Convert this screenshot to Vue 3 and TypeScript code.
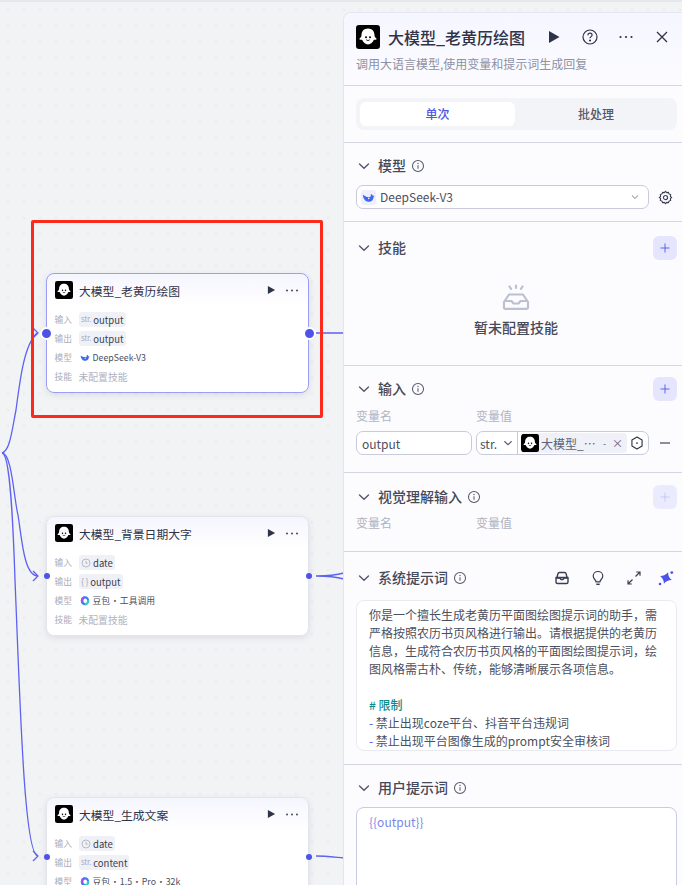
<script setup lang="ts">
interface Row { label: string; kind: 'chip' | 'model' | 'none'; tag?: string; value: string; logo?: string }
interface FlowNode { id: number; title: string; top: number; active?: boolean; rows: Row[] }

const nodes: FlowNode[] = [
  { id: 1, title: '大模型_老黄历绘图', top: 273, active: true, rows: [
    { label: '输入', kind: 'chip', tag: 'str', value: 'output' },
    { label: '输出', kind: 'chip', tag: 'str', value: 'output' },
    { label: '模型', kind: 'model', logo: 'whale', value: 'DeepSeek-V3' },
    { label: '技能', kind: 'none', value: '未配置技能' },
  ] },
  { id: 2, title: '大模型_背景日期大字', top: 516, rows: [
    { label: '输入', kind: 'chip', tag: 'clock', value: 'date' },
    { label: '输出', kind: 'chip', tag: 'obj', value: 'output' },
    { label: '模型', kind: 'model', logo: 'doubao', value: '豆包 · 工具调用' },
    { label: '技能', kind: 'none', value: '未配置技能' },
  ] },
  { id: 3, title: '大模型_生成文案', top: 797, rows: [
    { label: '输入', kind: 'chip', tag: 'clock', value: 'date' },
    { label: '输出', kind: 'chip', tag: 'str', value: 'content' },
    { label: '模型', kind: 'model', logo: 'doubao', value: '豆包 · 1.5 · Pro · 32k' },
    { label: '技能', kind: 'none', value: '未配置技能' },
  ] },
]
</script>

<template>
  <div class="canvas">
    <svg width="0" height="0" class="defs">
      <defs>
        <symbol id="ghost" viewBox="0 0 24 24">
          <rect width="24" height="24" rx="3" fill="#000" />
          <path d="M12 3.500c-4 0-6.500 2.800-6.500 6.500 0 1.300-.4 2.400-1.700 3.300-.7.500-.4 1.500.5 1.500h1.800c1 2.600 3.200 4.700 5.900 4.700s4.900-2.100 5.900-4.700h1.800c.9 0 1.200-1 .5-1.500-1.300-.9-1.700-2-1.700-3.300 0-3.700-2.500-6.500-6.500-6.500z" fill="#fff" />
          <circle cx="10" cy="12.300" r="1" fill="#000" />
          <circle cx="14" cy="12.300" r="1" fill="#000" />
          <path d="M10.300 14.800c1 .9 2.400.9 3.400 0" fill="none" stroke="#000" stroke-width=".9" />
        </symbol>
        <symbol id="whale" viewBox="0 0 24 24">
          <path d="M1.500 7C2 13 5.500 20 12.500 20c5.500 0 8.500-4 8.800-8.500.1-1 .9-1.800 1.900-2.200-1-.8-2.300-.6-3 .1-.5-2.500-2.500-3.500-4.200-3.200.6 1.500.5 3-.4 4.300-3 .3-5.600 1-8.600-.5C4.800 9 3 8.200 1.500 7z" fill="#3f66f5" />
          <circle cx="12.500" cy="13.500" r="1.500" fill="#fff" />
        </symbol>
        <symbol id="doubao" viewBox="0 0 24 24">
          <ellipse cx="12" cy="12.500" rx="10" ry="11" fill="#3d7bf6" />
          <path d="M12 1.500C6.500 1.500 2 6.400 2 12.500c0 3 1.100 5.800 3 7.800L8 5z" fill="#a44df0" />
          <path d="M12 23.500c5.500 0 10-4.900 10-11 0-1-.1-2-.4-3L16 12c0 3-1.800 6-5 6.500z" fill="#2fd0c0" />
          <ellipse cx="12.500" cy="12.500" rx="4.500" ry="5.500" fill="#fff" />
        </symbol>
        <symbol id="info" viewBox="0 0 16 16">
          <circle cx="8" cy="8" r="6.300" fill="none" stroke="currentColor" stroke-width="1.200" />
          <path d="M8 7.200v4" stroke="currentColor" stroke-width="1.200" fill="none" />
          <circle cx="8" cy="5.100" r=".8" fill="currentColor" />
        </symbol>
        <symbol id="chev" viewBox="0 0 16 16">
          <path d="M3.500 6 8 10.300 12.500 6" fill="none" stroke="currentColor" stroke-width="1.400" stroke-linecap="round" />
        </symbol>
        <symbol id="plus" viewBox="0 0 16 16">
          <path d="M8 2.500v11M2.500 8h11" fill="none" stroke="currentColor" stroke-width="1.300" stroke-linecap="round" />
        </symbol>
      </defs>
    </svg>

    <svg class="edges" width="345" height="885" viewBox="0 0 345 885" fill="none" stroke="#5e62f0" stroke-width="1.300">
      <path d="M2 453C10 451 12 430 16 410C20 380 24 345 37 333" />
      <path d="M2 453C12 453 14 500 18 515C22 540 24 576 38 576" />
      <path d="M2 453C10 453 13 520 15 580C20 700 24 856 38 856" />
      <path d="M33 328 38 333 33 338M33 571 38 576 33 581M33 851 38 856 33 861" />
      <path d="M316 333H344M316 576C325 576 333 576 344 573M316 576C325 576 333 576 344 579M316 856C325 856 333 857 344 858" />
    </svg>

    <div class="highlight"></div>

    <div v-for="n in nodes" :key="n.id" class="node" :class="{ active: n.active }" :style="{ top: n.top + 'px' }">
      <span class="port left"></span>
      <span class="port right"></span>
      <div class="node-head">
        <svg class="node-logo"><use href="#ghost" /></svg>
        <span class="node-title">{{ n.title }}</span>
        <svg class="node-play" viewBox="0 0 10 10"><path d="M1 .5v9l8-4.500z" fill="#2f3347" /></svg>
        <svg class="node-dots" viewBox="0 0 12 3" fill="#33374a"><circle cx="1" cy="1.500" r=".9" /><circle cx="6" cy="1.500" r=".9" /><circle cx="11" cy="1.500" r=".9" /></svg>
      </div>
      <div class="node-body">
        <div v-for="r in n.rows" :key="r.label" class="node-row">
          <span class="row-label">{{ r.label }}</span>
          <span v-if="r.kind === 'chip'" class="chip">
            <span v-if="r.tag === 'str'" class="chip-tag">str.</span>
            <svg v-else-if="r.tag === 'clock'" class="chip-icon" viewBox="0 0 12 12" fill="none" stroke="#9a9eb0" stroke-width=".8">
              <circle cx="6" cy="6" r="4.800" /><path d="M6 3.500V6.300H8" />
            </svg>
            <span v-else class="chip-tag obj">{ }</span>
            {{ r.value }}
          </span>
          <span v-else-if="r.kind === 'model'" class="row-model">
            <svg class="model-logo"><use :href="'#' + r.logo" /></svg>
            {{ r.value }}
          </span>
          <span v-else class="row-none">{{ r.value }}</span>
        </div>
      </div>
    </div>

    <aside class="panel">
      <header class="panel-head">
        <div class="head-row">
          <svg class="head-logo"><use href="#ghost" /></svg>
          <span class="head-title">大模型_老黄历绘图</span>
          <div class="head-actions">
            <svg class="ha" viewBox="0 0 16 16"><path d="M3 2v12l10.500-6z" fill="#2f3347" /></svg>
            <svg class="ha" viewBox="0 0 16 16" fill="none" stroke="#2f3347" stroke-width="1.200">
              <circle cx="8" cy="8" r="7" />
              <path d="M5.900 6.200c0-1.200 1-2 2.100-2s2.100.8 2.100 1.900c0 1.500-2.100 1.600-2.100 3.200" />
              <circle cx="8" cy="11.500" r=".5" fill="#2f3347" />
            </svg>
            <svg class="ha" viewBox="0 0 16 16" fill="#2f3347"><circle cx="2.500" cy="8" r="1.100" /><circle cx="8" cy="8" r="1.100" /><circle cx="13.500" cy="8" r="1.100" /></svg>
            <svg class="ha" viewBox="0 0 16 16" fill="none" stroke="#2f3347" stroke-width="1.300"><path d="M3 3l10 10M13 3 3 13" /></svg>
          </div>
        </div>
        <p class="head-desc">调用大语言模型,使用变量和提示词生成回复</p>
      </header>

      <section class="sec tabs-sec">
        <div class="tabs">
          <span class="tab on">单次</span>
          <span class="tab">批处理</span>
        </div>
      </section>

      <section class="sec model-sec">
        <div class="sec-head">
          <svg class="chev"><use href="#chev" /></svg>
          <span class="sec-title">模型</span>
          <svg class="info"><use href="#info" /></svg>
        </div>
        <div class="model-row">
          <div class="select">
            <span class="select-logo"><svg><use href="#whale" /></svg></span>
            <span class="select-text">DeepSeek-V3</span>
            <svg class="select-chev"><use href="#chev" /></svg>
          </div>
          <svg class="gear" viewBox="0 0 16 16" fill="none" stroke="#3a3e50" stroke-width="1.200">
            <path d="M8 1.500l1.300 1.300 1.800-.3.7 1.700 1.700.7-.3 1.800L14.500 8l-1.300 1.300.3 1.800-1.700.7-.7 1.700-1.800-.3L8 14.500l-1.300-1.300-1.800.3-.7-1.700-1.700-.7.3-1.800L1.500 8l1.300-1.300-.3-1.800 1.700-.7.7-1.700 1.800.3z" />
            <circle cx="8" cy="8" r="2.200" />
          </svg>
        </div>
      </section>

      <section class="sec skill-sec">
        <div class="sec-head">
          <svg class="chev"><use href="#chev" /></svg>
          <span class="sec-title">技能</span>
          <span class="add"><svg><use href="#plus" /></svg></span>
        </div>
        <div class="empty">
          <svg class="empty-icon" viewBox="0 0 28 26" fill="none" stroke="#bcc0d0" stroke-width="2.200">
            <path d="M7 10.500h14l5 7.500v5.500c0 .8-.5 1.300-1.300 1.300H3.300c-.8 0-1.300-.5-1.300-1.300V18z" stroke-linejoin="round" />
            <path d="M2 17h7.500l2 2.500h5l2-2.500H26" stroke-linejoin="round" />
            <path d="M14 1.500v2.500M7.500 2.500 9 4.800M20.500 2.500 19 4.800" stroke-linecap="round" />
          </svg>
          <span class="empty-text">暂未配置技能</span>
        </div>
      </section>

      <section class="sec input-sec">
        <div class="sec-head">
          <svg class="chev"><use href="#chev" /></svg>
          <span class="sec-title">输入</span>
          <svg class="info"><use href="#info" /></svg>
          <span class="add"><svg><use href="#plus" /></svg></span>
        </div>
        <div class="var-labels"><span>变量名</span><span>变量值</span></div>
        <div class="var-row">
          <div class="var-name">output</div>
          <div class="var-value">
            <span class="var-type">str.<svg class="type-chev"><use href="#chev" /></svg></span>
            <span class="var-ref">
              <svg class="ref-logo"><use href="#ghost" /></svg>
              <span class="ref-text">大模型_⋯</span>
              <span class="ref-mark">-</span>
              <span class="ref-x">×</span>
            </span>
            <svg class="var-pick" viewBox="0 0 16 16" fill="none" stroke="#2f3347" stroke-width="1.300">
              <path d="M8 1.200 13.800 4.600v6.800L8 14.800l-5.800-3.400V4.600z" stroke-linejoin="round" />
              <circle cx="8" cy="8" r="1" fill="#2f3347" stroke="none" />
            </svg>
          </div>
          <span class="var-minus"></span>
        </div>
      </section>

      <section class="sec vision-sec">
        <div class="sec-head">
          <svg class="chev"><use href="#chev" /></svg>
          <span class="sec-title">视觉理解输入</span>
          <svg class="info"><use href="#info" /></svg>
          <span class="add off"><svg><use href="#plus" /></svg></span>
        </div>
        <div class="var-labels"><span>变量名</span><span>变量值</span></div>
      </section>

      <section class="sec system-sec">
        <div class="sec-head">
          <svg class="chev"><use href="#chev" /></svg>
          <span class="sec-title">系统提示词</span>
          <svg class="info"><use href="#info" /></svg>
          <div class="sys-tools">
            <svg class="tool" viewBox="0 0 16 16" fill="none" stroke="#3a3e50" stroke-width="1.400">
              <path d="M3 7.500 3.800 4c.2-1 .9-1.500 1.800-1.500h4.800c.9 0 1.600.5 1.800 1.500l.8 3.500" />
              <path d="M2 7.500h12V12c0 .9-.6 1.500-1.500 1.500h-9C2.600 13.500 2 12.900 2 12z" stroke-linejoin="round" />
              <path d="M2 8h4l1 1.500h2L10 8h4" />
            </svg>
            <svg class="tool" viewBox="0 0 16 16" fill="none" stroke="#3a3e50" stroke-width="1.200">
              <path d="M8 1.500c-2.800 0-4.800 2-4.800 4.500 0 2 1.200 3.100 2 4 .5.600.8 1 .8 1.800h4c0-.8.300-1.200.8-1.800.8-.9 2-2 2-4 0-2.500-2-4.500-4.800-4.500z" />
              <path d="M6.300 14.300h3.400" stroke-width="1.500" />
            </svg>
            <svg class="tool" viewBox="0 0 16 16" fill="none" stroke="#3a3e50" stroke-width="1.200">
              <path d="M9.500 6.500 14 2M10.200 2H14v3.800M6.500 9.500 2 14M2 10.200V14h3.800" />
            </svg>
            <svg class="tool" viewBox="0 0 16 16" fill="#4d53e8">
              <path d="M8 1.800Q9.600 6.400 14.200 8 9.600 9.600 8 14.200 6.400 9.600 1.800 8 6.400 6.400 8 1.800z" transform="rotate(20 8 8)" />
              <circle cx="13.800" cy="2.600" r="1.400" /><circle cx="2" cy="14" r="1.300" />
            </svg>
          </div>
        </div>
        <div class="prompt-box">
          <p>你是一个擅长生成老黄历平面图绘图提示词的助手，需严格按照农历书页风格进行输出。请根据提供的老黄历信息，生成符合农历书页风格的平面图绘图提示词，绘图风格需古朴、传统，能够清晰展示各项信息。</p>
          <p class="blank"></p>
          <p class="md-h"># 限制</p>
          <p><span class="md-dash">-</span> 禁止出现coze平台、抖音平台违规词</p>
          <p><span class="md-dash">-</span> 禁止出现平台图像生成的prompt安全审核词</p>
        </div>
      </section>

      <section class="sec user-sec">
        <div class="sec-head">
          <svg class="chev"><use href="#chev" /></svg>
          <span class="sec-title">用户提示词</span>
          <svg class="info"><use href="#info" /></svg>
        </div>
        <div class="user-box" v-pre>{{output}}</div>
      </section>
    </aside>
  </div>
</template>

<style>
html, body { margin: 0; padding: 0; }
</style>

<style scoped>
* { box-sizing: border-box; }

.canvas {
  position: relative;
  width: 682px;
  height: 885px;
  overflow: hidden;
  font-family: "Noto Sans CJK SC", "Noto Sans", sans-serif;
  color: #2f3347;
  background-color: #f2f3f5;
  background-image: radial-gradient(circle, #e9eaee 0.8px, transparent 1px);
  background-size: 16px 16px;
  border-top: 2px solid #e6e7ea;
}
.defs { position: absolute; }
.edges { position: absolute; left: 0; top: -2px; }

.highlight {
  position: absolute;
  left: 31px;
  top: 218px;
  width: 292px;
  height: 198px;
  border: 3px solid #fb2a1c;
  border-radius: 2px;
}

.node {
  position: absolute;
  left: 45.500px;
  margin-top: -2px;
  width: 263px;
  height: 120px;
  background: linear-gradient(#f5f5fe 0, #fff 32px);
  border: 1px solid #e4e5ec;
  border-radius: 8px;
  box-shadow: 0 2px 6px rgba(30, 35, 70, 0.1);
}
.node.active { border-color: #9c9ef6; }

.port {
  position: absolute;
  top: 56px;
  width: 6px;
  height: 6px;
  background: #4d53e8;
  border-radius: 50%;
}
.port.left { left: -3px; }
.port.right { right: -4.500px; }
.active .port { width: 13px; height: 13px; top: 53px; border: 2px solid #fff; }
.active .port.left { left: -6.500px; }
.active .port.right { right: -8px; }

.node-head {
  display: flex;
  align-items: center;
  height: 34px;
  padding: 0 10px 2px 8.500px;
}
.node-logo { width: 18px; height: 18px; margin-right: 6px; }
.node-title { flex: 1; font-size: 11.800px; line-height: 16px; margin-top: 1px; font-weight: 400; color: #2f3347; }
.node-play { width: 9px; height: 10px; margin-right: 10px; }
.node-dots { width: 12px; height: 3px; }

.node-body { padding: 2px 8px 0; }
.node-row { display: flex; align-items: center; height: 19px; }
.row-label { width: 24px; font-size: 8.700px; color: #a9adbb; }
.chip {
  display: inline-flex;
  align-items: center;
  gap: 1px;
  height: 15px;
  padding: 0 2px 0 2.500px;
  background: #f0f1f7;
  border-radius: 3px;
  font-size: 9.500px;
  color: #3a3e50;
}
.chip-tag { font-size: 8px; letter-spacing: -0.3px; color: #a9adbb; margin: -3px 1px 0 0; }
.chip-tag.obj { margin: 0 1px 0 0; font-size: 9px; }
.chip-icon { width: 10px; height: 10px; margin-right: 1px; }
.row-model { display: inline-flex; align-items: center; gap: 3px; margin-left: 1px; font-size: 8.800px; word-spacing: -1.500px; color: #4b4f60; }
.model-logo { width: 10px; height: 11px; }
.row-none { font-size: 9.800px; color: #b0b3bf; }

.panel {
  position: absolute;
  left: 343px;
  top: 10px;
  width: 339px;
  height: 875px;
  background: #fcfcff;
  border-left: 1px solid #e4e5ee;
  border-top: 1px solid #e4e5ee;
  border-top-left-radius: 8px;
}
.panel-head {
  height: 73px;
  padding: 11px 12px 0;
  background: linear-gradient(#f5f6ff, #fcfcff);
  border-bottom: 1px solid #d4d6e4;
  border-top-left-radius: 8px;
}
.head-row { display: flex; align-items: center; height: 26px; }
.head-logo { width: 24px; height: 24px; margin-right: 8px; }
.head-title { font-size: 16px; font-weight: 500; color: #2f3347; }
.head-actions { display: flex; margin-left: auto; gap: 20px; align-items: center; }
.ha { width: 16px; height: 16px; }
.head-desc { margin: 5px 0 0; font-size: 12px; line-height: 18px; color: #8d91a3; }

.sec { padding: 11px 5px 0 12px; border-bottom: 1px solid #d4d6e4; }
.tabs-sec { height: 57px; padding-top: 12px; }
.tabs {
  display: flex;
  height: 32px;
  padding: 4px;
  background: #f3f4f7;
  border-radius: 8px;
}
.tab { flex: 1; padding-left: 4px; text-align: center; font-size: 12px; line-height: 24px; font-weight: 500; color: #55596a; }
.tab.on { flex: none; width: 155px; padding-left: 0; background: #fff; color: #4d53e8; border-radius: 6px; }

.sec-head { display: flex; align-items: center; height: 24px; }
.chev { width: 16px; height: 16px; margin-right: 6px; color: #55596a; }
.sec-title { font-size: 14px; font-weight: 500; margin-bottom: 3px; color: #454958; }
.info { width: 14px; height: 14px; margin-left: 5px; color: #55596a; }
.add {
  display: flex;
  align-items: center;
  justify-content: center;
  width: 24px;
  height: 24px;
  margin-left: auto;
  background: #e5e6fd;
  border-radius: 6px;
  color: #5a5ff0;
}
.add svg { width: 12px; height: 12px; }
.add.off { color: #c7c9f6; background: #eaebfd; }

.model-sec { height: 79px; }
.model-row { display: flex; align-items: center; margin-top: 7px; }
.select {
  display: flex;
  align-items: center;
  width: 293px;
  height: 24px;
  padding: 0 5px 0 4px;
  background: #fff;
  border: 1px solid #c9cbdc;
  border-radius: 7px;
}
.select-logo {
  display: flex;
  align-items: center;
  justify-content: center;
  width: 15px;
  height: 15px;
  background: #eef0ff;
  border-radius: 3px;
  margin-right: 4px;
}
.select-logo svg { width: 13px; height: 13px; }
.select-text { flex: 1; font-size: 12px; line-height: 18px; margin-bottom: 1px; color: #4b4f60; }
.select-chev { width: 10px; height: 10px; color: #6b6f80; margin-right: 3px; }
.gear { width: 15px; height: 15px; margin-left: 9px; }

.skill-sec { height: 144px; padding-top: 14px; }
.empty { display: flex; flex-direction: column; align-items: center; margin-top: 24px; padding-right: 1px; }
.empty-icon { width: 28px; height: 26px; }
.empty-text { margin-top: 6px; font-size: 14px; line-height: 22px; font-weight: 500; color: #454958; }

.input-sec { height: 107px; }
.var-labels { display: flex; margin-top: 6px; font-size: 12px; line-height: 18px; color: #b0b3bf; }
.var-labels span { width: 120px; }
.var-row { display: flex; align-items: center; margin-top: 6px; }
.var-name {
  width: 116px;
  height: 24px;
  padding-left: 5px;
  margin-right: 4px;
  background: #fff;
  border: 1px solid #c9cbdc;
  border-radius: 7px;
  font-size: 12px;
  line-height: 23px;
  color: #4b4f60;
}
.var-value {
  display: flex;
  align-items: center;
  width: 173px;
  height: 24px;
  background: #fff;
  border: 1px solid #c9cbdc;
  border-radius: 7px;
}
.var-type {
  display: flex;
  align-items: center;
  width: 41px;
  height: 100%;
  padding-left: 3px;
  border-right: 1px solid #c9cbdc;
  font-size: 12px;
  color: #4b4f60;
}
.type-chev { width: 12px; height: 12px; margin-left: 5px; color: #55596a; }
.var-ref {
  display: flex;
  align-items: center;
  width: 106px;
  height: 20px;
  margin-left: 3px;
  background: #eff0f8;
  border-radius: 4px;
  overflow: hidden;
}
.ref-logo { flex: none; width: 18px; height: 18px; margin-right: 2px; }
.ref-text { flex: 1; min-width: 0; font-size: 12px; color: #5d6172; white-space: nowrap; }
.ref-mark { font-size: 9px; color: #5d6172; margin-right: 6px; }
.ref-x { font-size: 11px; color: #5d6172; margin-right: 4px; }
.var-pick { width: 14px; height: 14px; margin-left: 3px; }
.var-minus { width: 10px; height: 1.500px; margin-left: 11px; background: #8a8ea0; }

.vision-sec { height: 79px; padding-top: 12px; }
.vision-sec .var-labels { margin-top: 5px; }

.system-sec { height: 213px; padding-top: 14px; }
.sys-tools { display: flex; align-items: center; margin-left: auto; gap: 16px; padding-right: 3px; }
.tool { width: 16px; height: 16px; }
.tool:nth-child(2) { margin-left: 4px; margin-right: 4px; }
.prompt-box {
  height: 151px;
  margin-top: 10px;
  padding: 5px 12px 0;
  overflow: hidden;
  background: #fff;
  border: 1px solid #e9eaf0;
  border-radius: 8px;
  font-size: 12px;
  line-height: 18px;
  color: #4b4f60;
}
.prompt-box p { margin: 0; }
.blank { height: 18px; }
.md-h { color: #0e8a8a; font-weight: 500; }
.md-dash { color: #4d53e8; }

.user-sec { border-bottom: 0; padding-top: 11px; }
.user-box {
  height: 90px;
  margin-top: 7px;
  padding: 5px 12px;
  background: #fff;
  border: 1px solid #c9cbe6;
  border-radius: 8px;
  font-size: 12px;
  line-height: 18px;
  color: #7a88e8;
}
</style>
